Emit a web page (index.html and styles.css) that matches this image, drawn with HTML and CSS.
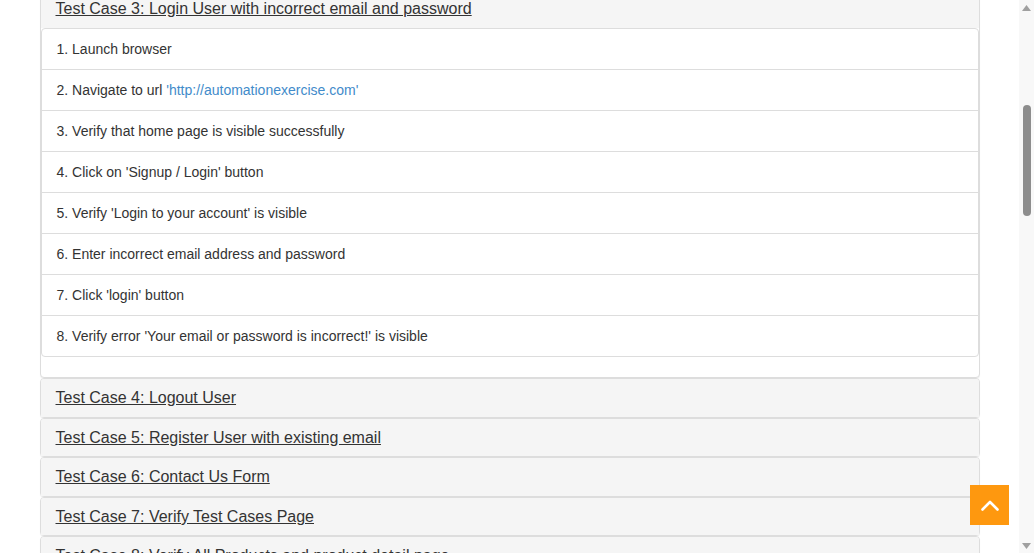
FILE: index.html
```html
<!DOCTYPE html>
<html lang="en">
<head>
<meta charset="utf-8">
<title>Test Cases</title>
<link rel="stylesheet" href="styles.css">
</head>
<body>
<div class="page">
  <div class="container">
    <div class="panel">
      <div class="panel-heading"><h4 class="panel-title"><a href="#">Test Case 3: Login User with incorrect email and password</a></h4></div>
      <ul class="list-group">
        <li class="list-group-item">1. Launch browser</li>
        <li class="list-group-item">2. Navigate to url <a class="link" href="#">'http://automationexercise.com'</a></li>
        <li class="list-group-item">3. Verify that home page is visible successfully</li>
        <li class="list-group-item">4. Click on 'Signup / Login' button</li>
        <li class="list-group-item">5. Verify 'Login to your account' is visible</li>
        <li class="list-group-item">6. Enter incorrect email address and password</li>
        <li class="list-group-item">7. Click 'login' button</li>
        <li class="list-group-item">8. Verify error 'Your email or password is incorrect!' is visible</li>
      </ul>
    </div>
    <div class="panel"><div class="panel-heading"><h4 class="panel-title"><a href="#">Test Case 4: Logout User</a></h4></div></div>
    <div class="panel"><div class="panel-heading"><h4 class="panel-title"><a href="#">Test Case 5: Register User with existing email</a></h4></div></div>
    <div class="panel"><div class="panel-heading"><h4 class="panel-title"><a href="#">Test Case 6: Contact Us Form</a></h4></div></div>
    <div class="panel"><div class="panel-heading"><h4 class="panel-title"><a href="#">Test Case 7: Verify Test Cases Page</a></h4></div></div>
    <div class="panel"><div class="panel-heading"><h4 class="panel-title"><a href="#">Test Case 8: Verify All Products and product detail page</a></h4></div></div>
    <div class="panel"><div class="panel-heading"><h4 class="panel-title"><a href="#">Test Case 9: Search Product</a></h4></div></div>
  </div>
  <a class="scroll-up" href="#" aria-label="Scroll to top">
    <svg width="18" height="11" viewBox="0 0 18 11"><path d="M1.5 9.5 L9 2 L16.5 9.5" fill="none" stroke="#fff" stroke-width="2.6" stroke-linecap="round" stroke-linejoin="round"/></svg>
  </a>
</div>
<div class="scrollbar">
  <div class="sb-arrow"><svg width="9" height="6" viewBox="0 0 9 6"><path d="M4.5 0 L9 6 L0 6 Z" fill="#a0a0a0"/></svg></div>
  <div class="sb-track"><div class="sb-thumb"></div></div>
  <div class="sb-arrow"><svg width="9" height="6" viewBox="0 0 9 6"><path d="M0 0 L9 0 L4.5 6 Z" fill="#a0a0a0"/></svg></div>
</div>
</body>
</html>
```
FILE: styles.css
```css
html, body {
  margin: 0;
  padding: 0;
  height: 553px;
  overflow: hidden;
}
body {
  display: flex;
  background: #fff;
  font-family: "Liberation Sans", Arial, sans-serif;
  color: #333;
}
.page {
  flex: 1;
  position: relative;
  overflow: hidden;
}
.container {
  width: 940px;
  margin: -10.6px auto 0;
  padding: 0 15px;
}
.panel {
  background: #fff;
  border: 1px solid #ddd;
  border-radius: 4px;
  box-shadow: 0 1px 1px rgba(0, 0, 0, 0.05);
}
.panel-heading {
  background: #f5f5f5;
  padding: 10px 15px;
  border-radius: 3px 3px 0 0;
}
.panel-title {
  margin: 0;
  font-size: 16px;
  font-weight: normal;
  line-height: 1.1;
}
.panel-title a {
  color: #333;
  text-decoration: underline;
}
.list-group {
  list-style: none;
  margin: 0 0 20px;
  padding: 0;
}
.list-group-item {
  border: 1px solid #ddd;
  margin-bottom: -1px;
  padding: 10px 15px;
  font-size: 14px;
  line-height: 20px;
  color: #333;
  background: #fff;
}
.list-group-item:first-child {
  border-radius: 4px 4px 0 0;
}
.list-group-item:last-child {
  margin-bottom: 0;
  border-radius: 0 0 4px 4px;
}
.link {
  color: #428bca;
  text-decoration: none;
}
.scroll-up {
  position: absolute;
  right: 10px;
  bottom: 28px;
  width: 39px;
  height: 40px;
  background: #fe980f;
  display: flex;
  align-items: center;
  justify-content: center;
}
.scrollbar {
  width: 15px;
  background: #f8f8f8;
  display: flex;
  flex-direction: column;
}
.sb-arrow {
  height: 15px;
  display: flex;
  align-items: center;
  justify-content: center;
}
.sb-track {
  flex: 1;
  display: flex;
  justify-content: center;
}
.sb-thumb {
  width: 8px;
  height: 111px;
  margin-top: 90px;
  margin-left: 1px;
  background: #8d8d8d;
  border-radius: 4px;
}
```
